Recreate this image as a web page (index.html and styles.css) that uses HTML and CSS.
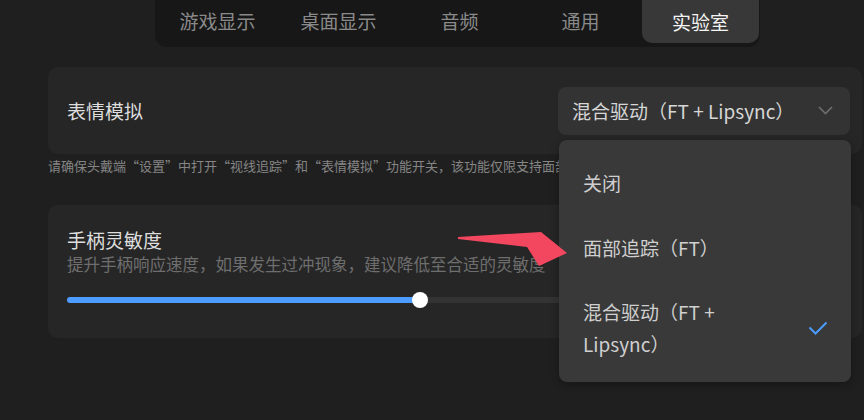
FILE: index.html
```html
<!DOCTYPE html>
<html lang="zh">
<head>
  <meta charset="UTF-8">
  <title>实验室</title>
  <link rel="stylesheet" href="styles.css">
</head>
<body>
  <!-- Tabs -->
  <nav class="tabs">
    <div class="tab">游戏显示</div>
    <div class="tab">桌面显示</div>
    <div class="tab">音频</div>
    <div class="tab">通用</div>
    <div class="tab tab-active">实验室</div>
  </nav>

  <main class="content">
    <div class="card card-row">
      <span class="card-title">表情模拟</span>
      <div class="select">
        <span>混合驱动（FT + Lipsync）</span>
        <svg class="chevron" width="15" height="9" viewBox="0 0 15 9"><path d="M1 1l6.5 6.5L14 1" fill="none" stroke="#6f6f6f" stroke-width="1.6"/></svg>
      </div>
    </div>
    <p class="note">请确保头戴端“设置”中打开“视线追踪”和“表情模拟”功能开关，该功能仅限支持面部追踪的设备使用</p>

    <div class="card card-slider">
      <div class="card-title">手柄灵敏度</div>
      <div class="card-sub">提升手柄响应速度，如果发生过冲现象，建议降低至合适的灵敏度</div>
      <div class="slider">
        <div class="slider-fill"></div>
        <div class="slider-thumb"></div>
      </div>
    </div>
  </main>

  <!-- Dropdown menu -->
  <div class="menu">
    <div class="menu-item"><span>关闭</span></div>
    <div class="menu-item"><span>面部追踪（FT）</span></div>
    <div class="menu-item menu-item-wide">
      <span class="menu-text-wrap">混合驱动（FT + Lipsync）</span>
      <svg width="20" height="14" viewBox="0 0 20 14"><path d="M1.5 6.5l6 6L18.5 1.5" fill="none" stroke="#4b9bff" stroke-width="2"/></svg>
    </div>
  </div>

  <!-- Annotation arrow -->
  <svg class="arrow" width="120" height="45" viewBox="0 0 120 45">
    <polygon points="3,9 86,4 112,25 84,38 72,19 3,11" fill="#f2475f"/>
  </svg>
</body>
</html>
```

FILE: styles.css
```css
body {
  margin: 0;
  width: 864px;
  height: 420px;
  overflow: hidden;
  background-color: #1f1f1f;
  font-family: "Noto Sans CJK SC", "Noto Sans", sans-serif;
  color: #dcdcdc;
}
.tabs {
  display: flex;
  width: 605px;
  height: 47px;
  margin-left: 155px;
  padding-left: 2px;
  box-sizing: border-box;
  background-color: #171717;
  border-radius: 0 0 12px 12px;
}
.tab {
  display: flex;
  align-items: center;
  justify-content: center;
  width: 121px;
  height: 40px;
  font-size: 19px;
  color: #8a8a8a;
}
.tab-active {
  width: 117px;
  height: 43px;
  margin-left: 1px;
  background-color: #383838;
  border-radius: 0 0 10px 10px;
  color: #f4f4f4;
}
.content {
  padding: 20px 2px 0 48px;
}
.card {
  background-color: #262626;
  border-radius: 10px;
}
.card-row {
  display: flex;
  align-items: center;
  justify-content: space-between;
  height: 87px;
  padding: 0 12px 0 19px;
}
.card-title {
  font-size: 19px;
  color: #dedede;
}
.select {
  display: flex;
  align-items: center;
  justify-content: space-between;
  width: 292px;
  height: 48px;
  box-sizing: border-box;
  padding: 0 17px 0 14px;
  background-color: #333333;
  border-radius: 8px;
  font-size: 19px;
  color: #d6d6d6;
}
.note {
  width: 511px;
  overflow: hidden;
  margin: 4px 0 0;
  font-size: 13px;
  line-height: 16px;
  color: #858585;
  white-space: nowrap;
}
.card-slider {
  margin-top: 31px;
  height: 133px;
  padding: 22px 19px 0;
  box-sizing: border-box;
}
.card-slider .card-title {
  line-height: 26px;
}
.card-sub {
  font-size: 16.5px;
  line-height: 22px;
  color: #6e6e6e;
  white-space: nowrap;
}
.slider {
  position: relative;
  height: 6px;
  margin-top: 22px;
  background-color: #333333;
  border-radius: 3px;
}
.slider-fill {
  width: 353px;
  height: 6px;
  background-color: #4d9cff;
  border-radius: 3px;
}
.slider-thumb {
  position: absolute;
  left: 345px;
  top: -5px;
  width: 16px;
  height: 16px;
  background-color: #fff;
  border-radius: 50%;
}
.menu {
  position: absolute;
  left: 559px;
  top: 140px;
  width: 292px;
  padding: 10px 0 7px;
  box-sizing: border-box;
  background-color: #393939;
  border-radius: 8px;
  box-shadow: 0 2px 8px rgba(0, 0, 0, 0.3);
}
.menu-item {
  display: flex;
  align-items: center;
  justify-content: space-between;
  height: 65px;
  padding: 0 23px 0 24px;
  font-size: 19px;
  line-height: 32px;
  color: #cfcfcf;
}
.menu-item-wide {
  height: 95px;
}
.menu-text-wrap {
  width: 170px;
}
.arrow {
  position: absolute;
  left: 455px;
  top: 228px;
}
```
